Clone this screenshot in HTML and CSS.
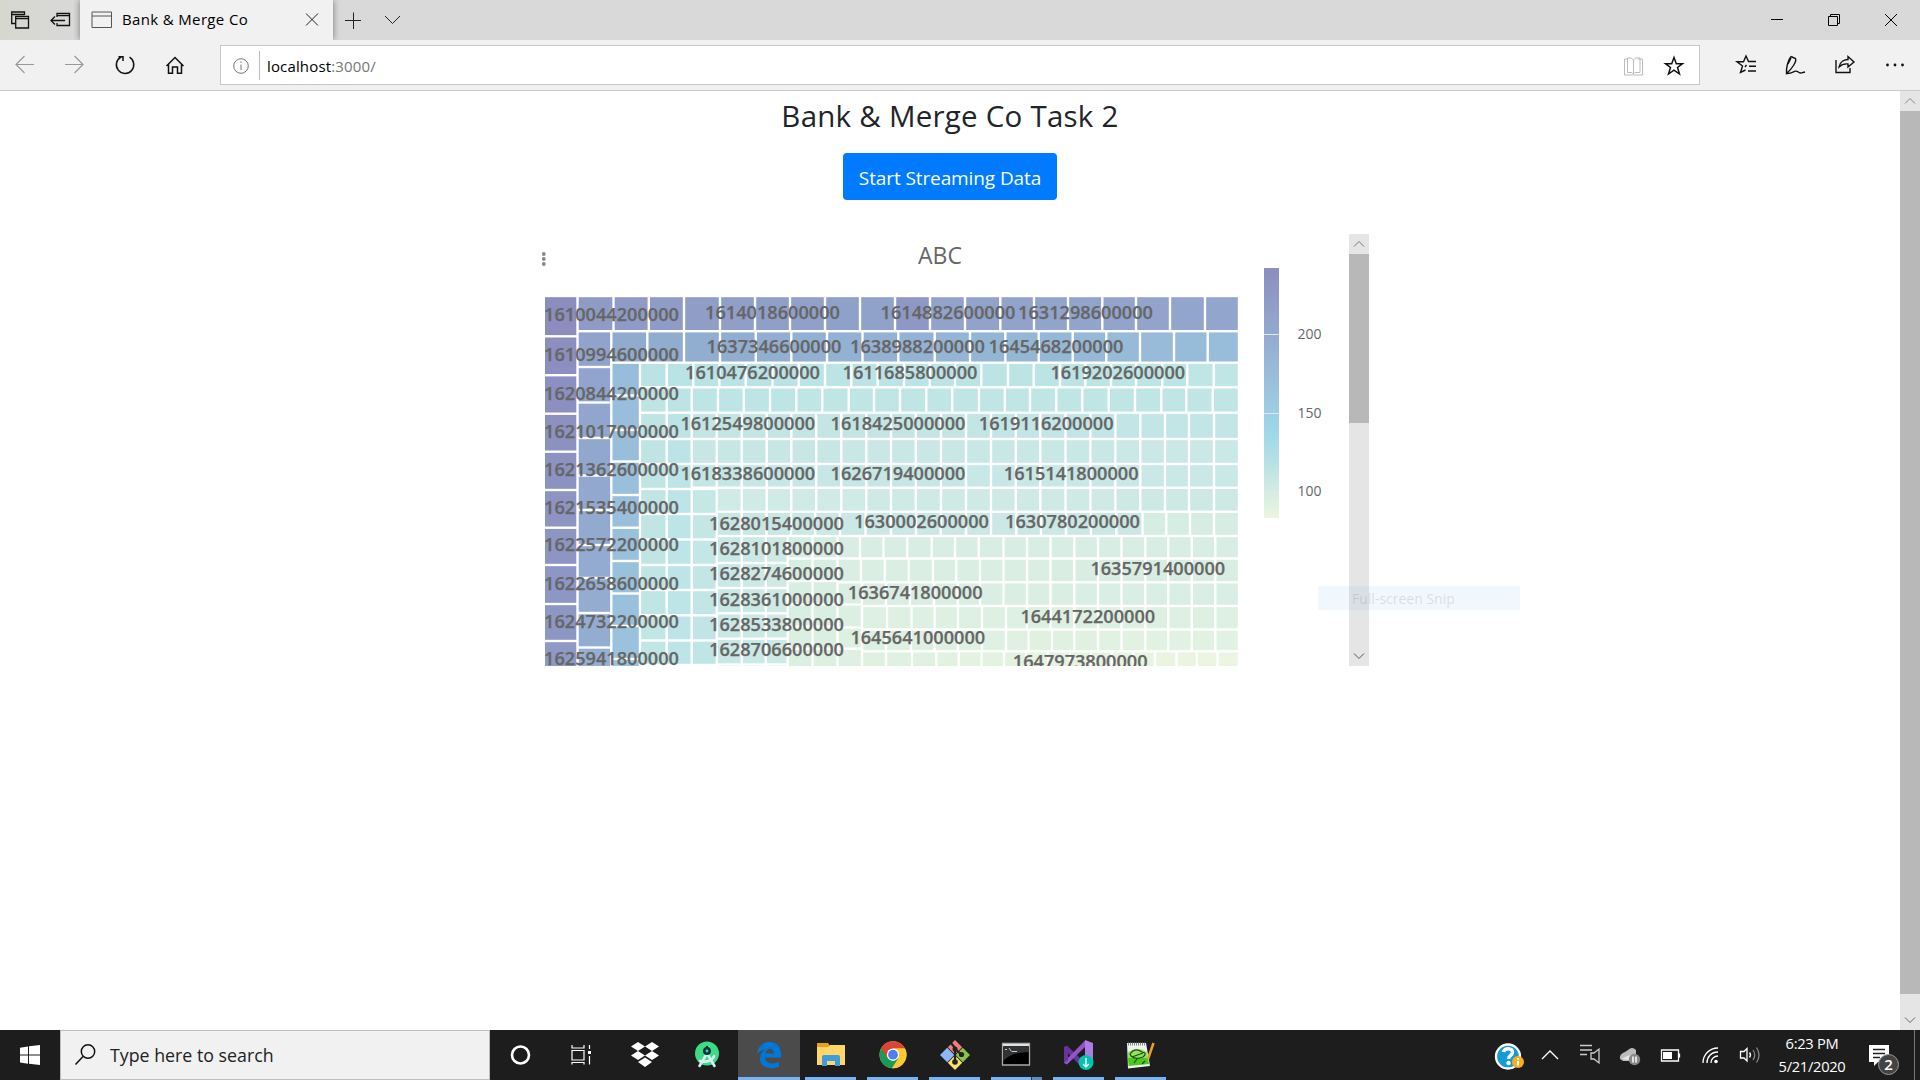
FILE: index.html
```html
<!DOCTYPE html>
<html lang="en">
<head>
<meta charset="utf-8">
<title>Bank &amp; Merge Co</title>
<link rel="stylesheet" href="styles.css">
</head>
<body>
<header class="tabstrip">
  <svg class="tab-tools" width="80" height="40" fill="none" stroke="#111" stroke-width="1.3">
    <path d="M15 23.500H11.700V12H24.500V15M11.700 14.500H24.500"/><path d="M15.700 16.500H28.500V28H15.700ZM15.700 18.700H28.500"/>
    <path d="M57 17V13.500H69.500V25.500H57V23M57 15.700H69.500M51 20.500H65M55 16.500L51 20.500L55 24.500"/>
  </svg>
  <div class="tab">
    <svg width="22" height="18" fill="none" stroke="#555"><path d="M1 1H20.500V16.500H1ZM1 5H20.500"/></svg>
    <span class="tab-title">Bank &amp; Merge Co</span>
    <svg width="16" height="16" fill="none" stroke="#222"><path d="M2 1.500L14 13.500M14 1.500L2 13.500"/></svg>
  </div>
  <svg width="90" height="40" fill="none" stroke="#222"><path d="M12 20.500H28M20.500 12.500V29M52 16L59.500 23.500L67 16"/></svg>
  <svg class="window-buttons" width="140" height="40" fill="none" stroke="#000"><path d="M1 19.500H13M58.500 16.500H67.500V25.500H58.500ZM60.500 16.500V14.500H69.500V23.500H67.500M115 14L127 26M127 14L115 26"/></svg>
</header>
<nav class="toolbar">
  <svg class="nav-icons" width="220" height="50" fill="none" stroke="#999" stroke-width="1.2">
    <path d="M34 24.500H16M24.500 16L16 24.500L24.500 33M65 24.500H83M74.500 16L83 24.500L74.500 33"/>
    <path stroke="#111" stroke-width="1.5" d="M129.500 17.200A8.700 8.700 0 1 1 121 17M118.500 16.700H123V21"/>
    <path stroke="#111" stroke-width="1.5" d="M166.500 26L175 17.500L183.500 26M168.500 24.500V33.300H172.500V27H177.500V33.300H181.500V24.500"/>
  </svg>
  <div class="address">
    <svg width="40" height="38" fill="none" stroke="#777"><circle cx="20" cy="20" r="7.300"/><path d="M20 18.500V24M20 15.500V17"/><path stroke="#bbb" d="M38.500 5V34"/></svg>
    <span class="url">localhost<i>:3000/</i></span>
    <svg class="address-icons" width="80" height="38" fill="none">
      <path stroke="#bbb" d="M5.500 13H9M19 13H23.500V29H5.500V13M8.500 12H12L14.500 14L17 12H21V26.500H16L14.500 28L13 26.500H8.500ZM14.500 14V28"/>
      <path stroke="#111" stroke-width="1.500" d="M55 11.500L57.300 17.700H63.500L58.500 21.500L60.500 28L55 24.200L49.500 28L51.500 21.500L46.500 17.700H52.700Z"/>
    </svg>
  </div>
  <svg class="tools" width="190" height="50" fill="none" stroke="#111" stroke-width="1.4">
    <path d="M15.500 30L10.500 32.500L12.500 26L7 21.800H13.500L16 16L18.500 21.500H26M19 26.300H26M18 31H26M16.500 25L15 27"/>
    <path d="M61 16.500L65.500 18.500C67 21 62 29 56.500 33.500C56 28 58 20 61 16.500M61 18L58 24M57 33.500C65 33 64 29 69 32.500C71 34 72 32.500 75 32"/>
    <path d="M106 20V32.500H120V28M109 27C110 21 115 19.500 118 19.500V16.500L124 22L118 27V24C114 23.500 111 25 109 27Z"/>
    <g fill="#111" stroke="none"><circle cx="157.500" cy="25" r="1.400"/><circle cx="165" cy="25" r="1.400"/><circle cx="172.500" cy="25" r="1.400"/></g>
  </svg>
</nav>
<div class="viewport">
  <main class="page">
    <h1>Bank &amp; Merge Co Task 2</h1>
    <button class="start">Start Streaming Data</button>
    <section class="panel">
      <svg class="chart" viewBox="531 234 818 432" width="818" height="432">
        <defs><linearGradient id="scale" x1="0" y1="0" x2="0" y2="1"><stop offset="0" stop-color="#8b8dbe"/><stop offset=".22" stop-color="#92a5cd"/><stop offset=".66" stop-color="#9fd8e9"/><stop offset=".77" stop-color="#b4e1e5"/><stop offset=".93" stop-color="#dcefe2"/><stop offset="1" stop-color="#ecf5e0"/></linearGradient></defs>
        <g fill="#888"><circle cx="543.800" cy="254" r="1.900"/><circle cx="543.800" cy="259" r="1.900"/><circle cx="543.800" cy="264" r="1.900"/></g>
        <text class="chart-title" x="940" y="264">ABC</text>
        <g id="tiles"></g>
        <g id="labels"></g>
        <rect x="1264" y="268" width="15" height="250" fill="url(#scale)"/>
        <path stroke="#e3e6ea" d="M1264 334.500H1279M1264 413.500H1279M1264 491.500H1279"/>
        <g class="legend"><text x="1297.500" y="339">200</text><text x="1297.500" y="418">150</text><text x="1297.500" y="496">100</text></g>
      </svg>
      <div class="scroll">
        <svg width="20" height="20" fill="none" stroke="#777"><path d="M5 12.500L10 7.500L15 12.500"/></svg>
        <div class="thumb"></div>
        <svg class="down" width="20" height="20" fill="none" stroke="#555"><path d="M5 7.500L10 12.500L15 7.500"/></svg>
      </div>
    </section>
    <div class="snip">Full-screen Snip</div>
  </main>
  <div class="scroll page-scroll">
    <svg width="20" height="20" fill="none" stroke="#888"><path d="M5 12.500L10 7.500L15 12.500"/></svg>
    <div class="thumb"></div>
    <svg class="down" width="20" height="20" fill="none" stroke="#666"><path d="M5 7.500L10 12.500L15 7.500"/></svg>
  </div>
</div>
<footer class="taskbar">
  <div class="win"><svg width="60" height="50" fill="#fff"><path d="M20 17.700L28 16.500V24.500H20ZM29 16.300L40 15V24.500H29ZM20 25.500H28V33.700L20 32.500ZM29 25.500H40V35L29 33.800Z"/></svg></div>
  <div class="search">
    <svg width="48" height="46" fill="none" stroke="#111" stroke-width="1.500"><circle cx="27" cy="20.500" r="6.700"/><path d="M22 25.500L14.500 33.500"/></svg>
    <span>Type here to search</span>
  </div>
  <div class="apps">
    <div class="app"><svg width="62" height="50"><circle cx="30.500" cy="25" r="8.500" fill="none" stroke="#fff" stroke-width="2.600"/></svg></div>
    <div class="app"><svg width="62" height="50" fill="none" stroke="#fff" stroke-width="1.200"><path d="M20 20.500H32V30H20ZM20 15V18H32V15M20 34.500V32.500H32V34.500M37.500 15V19M37.500 26V34.500"/><path fill="#fff" stroke="none" d="M36 21H39V24H36Z"/></svg></div>
    <div class="app"><svg width="62" height="50" fill="#fff"><path d="M17 16.500L24 12L31 16.500L24 21ZM31 16.500L38 12L45 16.500L38 21ZM17 25.500L24 21L31 25.500L24 30ZM31 25.500L38 21L45 25.500L38 30ZM24 32L31 27.500L38 32L31 37Z"/></svg></div>
    <div class="app"><svg width="62" height="50"><circle cx="31" cy="23.500" r="12" fill="#3ddc84"/><path d="M30 25L23.500 36M32 25L38.500 36M24 31C31 33 37 30 38 26" stroke="#d8edf5" stroke-width="2.600" fill="none" stroke-linecap="round"/><circle cx="31" cy="21" r="2.700" fill="none" stroke="#073042" stroke-width="2.500"/><path stroke="#073042" stroke-width="2" d="M31 16V18"/></svg></div>
    <div class="app open active"><svg width="62" height="50"><path fill="#0078d7" d="M19 24C20 16 25 12 31.500 12C39 12 43 17.500 43 24V27.500H27C27.500 34 36 35 41 31.500V36.500C33 40.500 22 38 22 28.500C22 24 24.500 21.500 27.500 20C22.500 20.500 20.500 22 19 24ZM27.500 23.500H36C36 17.500 28 17.500 27.500 23.500Z"/></svg></div>
    <div class="app open"><svg width="62" height="50"><path fill="#e8a317" d="M17 13H28L30 16V21H17Z"/><path fill="#ffd667" d="M17 17H28L30 15H45V35H17Z"/><path fill="#3d9cdb" d="M22 36V27Q22 25 24 25H38Q40 25 40 27V36H35V31H27V36Z"/></svg></div>
    <div class="app open"><svg width="62" height="50"><circle cx="31" cy="24.700" r="13.500" fill="#fbc834"/><path fill="#189b58" d="M31 24.700L19.300 18A13.500 13.500 0 0 0 30 38.200L37 28Z"/><path fill="#dc4436" d="M31 24.700V18.500H43A13.500 13.500 0 0 0 19.300 18L25 28Z"/><path fill="#fbc834" d="M31 24.700L36.500 28L30 38.200A13.500 13.500 0 0 0 43 18.500H31Z"/><circle cx="31" cy="24.700" r="6.200" fill="#fff"/><circle cx="31" cy="24.700" r="4.900" fill="#4a83ee"/></svg></div>
    <div class="app open"><svg width="62" height="50"><path fill="#f47c7c" d="M31 10L38.200 17.200L31 24.400L23.800 17.200Z"/><path fill="#8db8f8" d="M23.200 17.800L30.400 25L23.200 32.200L16 25Z"/><path fill="#8bc34a" d="M38.800 17.800L46 25L38.800 32.200L31.600 25Z"/><path fill="#ffdf6c" d="M31 25.600L38.200 32.800L31 40L23.800 32.800Z"/><path stroke="#222" stroke-width="2.200" fill="none" d="M27 13L31 18V33M31 19L38 25"/><g fill="#222"><circle cx="31" cy="19" r="2.500"/><circle cx="31" cy="32" r="2.800"/><circle cx="37.500" cy="24.500" r="2.600"/></g></svg></div>
    <div class="app open split"><svg width="62" height="50"><path fill="#000" stroke="#aaa" stroke-width="1.300" d="M16.500 13.500H43.500V35H16.500Z"/><path fill="#dde3e8" d="M17 14H43V16.200H17Z"/><path fill="#333" d="M17 17H43V22Q26 22 17 31Z"/><path stroke="#ccc" d="M19 19.500H21M23 18L25.500 21.500M26 21.500H31"/></svg></div>
    <div class="app open"><svg width="62" height="50"><path fill="#68349b" d="M16 17L19 15.500L37 33V36L34 37.500L16 19Z"/><path fill="#9055ca" d="M16 32L37 10.500V17L19 34.500L16 33Z"/><path fill="#68349b" d="M16 17L20 20V30L16 33Z"/><path fill="#b07ae8" d="M37 10L45 13V35L37 39Z"/><circle cx="38" cy="32.500" r="7.500" fill="#00c4ad"/><path stroke="#fff" stroke-width="1.400" fill="none" d="M38 28V37M35 34L38 37L41 34"/></svg></div>
    <div class="app open"><svg width="62" height="50"><path fill="#f0f2ee" d="M17 13H36L40 36L18 38.500Z"/><path fill="#8fe35d" d="M18 22Q28 16 37 22L38 28L18 29Z"/><path fill="#4bc81c" d="M18 28H38L39 34L18.500 36Z"/><path stroke="#888" stroke-dasharray="1 1" stroke-width="3" d="M18 14H35"/><path fill="none" stroke="#234d16" stroke-width="1.200" d="M20 24Q25 17 32 22Q38 23 33 27Q25 30 21 26ZM22 27L33 23M24 33L27 29M32 34L35 31"/><path stroke="#e8a128" stroke-width="2.500" d="M43.500 13L38 29"/></svg></div>
  </div>
  <svg class="tray" width="270" height="50" fill="none" stroke="#fff" stroke-width="1.300">
    <circle cx="18" cy="26.500" r="12" fill="#159bd7" stroke-width="2.300"/><path stroke-width="3.500" d="M13.500 22C14 17.500 23 17.500 22.500 22.500C22 26 18.500 25.500 18.500 29"/><circle cx="18.500" cy="33" r="2.200" fill="#fff" stroke="none"/>
    <circle cx="28" cy="32" r="6" fill="#fbad22" stroke="none"/><path stroke-width="2" d="M28 31V35.500M28 28V29.700"/>
    <path d="M52 29L60 21L68 29"/>
    <path stroke="#ccc" d="M90 15.500H102M90 20H102M90 24.500H97M101 23H104L109 19V33L104 29H101Z"/>
    <g stroke="none"><path fill="#bbb" d="M133 31H146V20Q142 16 138 20L135 22Q129 24 130 29Z"/><path fill="#e4e4e4" d="M132 29Q140 23 147 26L144 31Z"/><circle cx="144.500" cy="29.500" r="5.700" fill="#888"/></g><path stroke-width="1.500" d="M143 26.500V32.500M146 26.500V32.500"/>
    <path d="M171.500 20H188.500V31H171.500ZM189.500 23.500V27.500"/><path fill="#fff" stroke="none" d="M173 22H182V29H173Z"/>
    <path d="M213 33C213 25 219 18 228 18M217 33C217 27 221 22 228 22M221 33C221 29 224 26 228 26"/><circle cx="226" cy="31.500" r="1.800" fill="#fff" stroke="none"/>
    <path d="M250.500 21.500H254L257 18.500V31L254 28H250.500ZM259.500 22.500Q261.500 25 259.500 27.500"/><path stroke="#888" d="M263 20Q266.500 25 263 30M266.500 17.500Q271.500 25 266.500 32.500"/>
  </svg>
  <div class="clock"><span>6:23 PM</span><span>5/21/2020</span></div>
  <svg class="notice" width="60" height="50"><path fill="#fff" d="M9 15H29V32H18L14 36V32H9Z"/><path stroke="#222" stroke-width="1.500" d="M13 19.500H25M13 23.500H25M13 27.500H20"/><circle cx="28.500" cy="34.500" r="10" fill="#444" stroke="#999"/><text x="28.500" y="40">2</text><path stroke="#777" d="M54.500 0V50"/></svg>
</footer>
<script src="chart.js"></script>
</body>
</html>
```
FILE: styles.css
```css
* { box-sizing: border-box; }
body { margin: 0; height: 1080px; display: flex; flex-direction: column; overflow: hidden; background: #fff; font-family: "Open Sans", "Noto Sans", sans-serif; color: #000; }
svg { display: block; flex: none; }
.tabstrip { display: flex; height: 40px; background: #d9d9d9; flex: none; }
.tab-tools { background: linear-gradient(90deg, #d5d7cf, #d9d9d9); }
.tab { width: 253px; display: flex; align-items: center; padding: 0 13px 0 11px; background: #f1f1f1; box-shadow: 0 0 7px #777; clip-path: inset(0 -7px 0 -7px); }
.tab-title { flex: 1; padding: 0 0 2px 9px; font-size: 15px; letter-spacing: .35px; }
.window-buttons { margin-left: auto; margin-right: 10px; }
.toolbar { display: flex; height: 51px; flex: none; background: #f1f1f1; border-bottom: 1px solid #c9c9c9; }
.address { display: flex; width: 1480px; height: 40px; margin: 5px 0 0; border: 1px solid #c6c6c6; background: #fff; }
.tools { margin-left: 30px; }
.url { padding-left: 6px; line-height: 40px; font-size: 15px; letter-spacing: .15px; }
.url i { font-style: normal; color: #767676; }
.address-icons { margin-left: auto; }
.viewport { display: flex; height: 939px; flex: none; }
.page { position: relative; width: 1900px; display: flex; flex-direction: column; align-items: center; }
h1 { margin: 6px 0 20px; height: 36px; line-height: 38px; font-size: 29.500px; letter-spacing: .24px; font-weight: 400; color: #212529; white-space: nowrap; }
.start { width: 214px; height: 47px; padding: 3px 0 0; border: 0; border-radius: 4px; background: #007bff; color: #fff; font: 19px/44px "Open Sans", sans-serif; letter-spacing: -.1px; white-space: nowrap; }
.panel { display: flex; width: 838px; height: 432px; margin-top: 34px; }
.chart text { fill: #666; text-anchor: middle; font-size: 18.150px; font-weight: 600; }
#labels text { stroke: #666; stroke-width: .25px; }
.chart .chart-title { font-size: 23px; font-weight: 400; }
.chart .legend text { font-size: 14px; font-weight: 400; text-anchor: start; }
.scroll { width: 20px; background: #e5e5e5; display: flex; flex-direction: column; }
.thumb { height: 169px; background: #b8b8b8; }
.page-scroll .thumb { height: 883px; }
.down { margin-top: auto; }
.snip { position: absolute; left: 1318px; top: 495px; width: 202px; height: 24px; padding-left: 34px; line-height: 25px; font-size: 14px; color: rgba(120, 100, 90, .2); background: rgba(60, 160, 240, .08); }
.taskbar { display: flex; height: 50px; flex: none; background: #1d1d1d; color: #fff; }
.search { display: flex; width: 430px; height: 50px; border: 1px solid #bdbdbd; background: #f1f1f1; color: #222; font-size: 17.800px; line-height: 49px; }
.search span { padding-left: 1px; }
.apps { display: flex; }
.app { width: 62px; display: flex; justify-content: center; position: relative; }
.app svg { margin-left: -1px; }
.open::after { content: ""; position: absolute; bottom: 0; left: 5px; width: 51px; height: 3px; background: #76b4f8; }
.active { background: #4b4b4b; }
.active::after { left: 0; width: 62px; }
.split::after { background: linear-gradient(90deg, #76b4f8 40px, #333 40px, #333 41px, #5d8cc4 41px); }
.tray { margin-left: auto; }
.clock { display: flex; flex-direction: column; align-items: center; width: 100px; font-size: 14.700px; line-height: 23px; padding-top: 2px; padding-left: 4px; letter-spacing: -.3px; white-space: nowrap; }
.notice text { fill: #fff; font-size: 15px; font-weight: 600; text-anchor: middle; }
```
FILE: chart.js
```js
const NS = 'http://www.w3.org/2000/svg';
const tileLayer = document.getElementById('tiles');
const labelLayer = document.getElementById('labels');

function mix(a, b, t) {
  const p = c => [1, 3, 5].map(i => parseInt(c.substr(i, 2), 16));
  const x = p(a), y = p(b);
  return `rgb(${x.map((v, i) => Math.round(v + (y[i] - v) * t)).join(',')})`;
}
function tile(x0, y0, x1, y1, fill) {
  const r = document.createElementNS(NS, 'rect');
  const set = { x: x0 + 1.2, y: y0 + 1.2, width: x1 - x0 - 2.4, height: y1 - y0 - 2.4, fill };
  for (const k in set) r.setAttribute(k, set[k]);
  tileLayer.append(r);
}
function row(y0, y1, xs, a, b) {
  for (let i = 0; i < xs.length - 1; i++) tile(xs[i], y0, xs[i + 1], y1, mix(a, b, i / (xs.length - 1)));
}
function column(x0, x1, ys, a, b) {
  for (let i = 0; i < ys.length - 1; i++) tile(x0, ys[i], x1, ys[i + 1], mix(a, b, i / (ys.length - 1)));
}

column(543.8, 577.5, [296, 336.3, 375.2, 413.7, 451.7, 490, 527.7, 565, 604, 641, 680], '#8b8dbe', '#8e9ac6');
row(296, 331.2, [577.5, 613.5, 648.8, 684, 720, 755, 790, 825, 860], '#8f9ac5', '#90a2ca');
tile(860, 296, 895, 331.2, '#90a1ca');
tile(895, 296, 930, 331.2, '#8f98c5');
row(296, 331.2, [930, 965, 1000.3, 1034, 1068, 1102.3, 1136, 1170, 1205, 1239], '#91a3cb', '#92a5cd');
column(577.5, 611.3, [331.2, 367, 402.5, 438, 475.5, 510, 545, 578, 613, 647.5, 683], '#91a3cc', '#94b0d2');
row(331.2, 362.7, [611.3, 647.3, 684, 720, 755.8, 791.3, 827, 862.5, 898.3, 934.7, 970, 1005.3, 1038.7, 1072.7, 1106.3, 1140, 1174, 1207.7, 1239], '#90abce', '#98bedb');
column(611.3, 640, [362.7, 395.5, 430, 461.5, 495, 527.7, 561, 593.5, 626, 659, 690], '#98bddb', '#9bc3dd');

row(362.7, 387.3, [640, 666.7, 693.2, 719.3, 745.7, 772.5, 798.7, 825, 851.3, 877.7, 904, 929.7, 955, 981.3, 1008, 1033.7, 1060, 1085.3, 1111, 1136, 1162.3, 1187.3, 1213.7, 1239], '#bae3e6', '#bfe5e5');
const ys = [387.3, 412.7, 439, 464, 489, 514, 539.5, 565, 590, 615.3, 640.5, 665, 691];
column(640, 666.7, ys, '#bee4e4', '#c1e6e6');
column(666.7, 691.7, ys, '#bce4e6', '#bee4e7');
column(691.7, 716.7, ys.slice(4), '#c5e7e6', '#bee4e6');
row(387.3, 412.7, [691.7, 718, 743.7, 770, 796.3, 822.3, 848.7, 874, 900, 926.3, 952.3, 979, 1004.8, 1030, 1056.3, 1082.3, 1108.7, 1135, 1161.3, 1186.3, 1212.7, 1239], '#bee5e5', '#c1e5e5');
const xs = [691.7, 716.7, 741.7, 766.7, 791.3, 816.2, 841.3, 866.3, 891, 915.8, 941, 966, 991, 1015.8, 1040.3, 1065.5, 1090.4, 1115.4, 1140.3, 1165, 1189, 1214, 1239];
row(412.7, 439, xs, '#c3e6e4', '#c2e5e5');
row(439, 464, xs, '#c7e7e5', '#c9e8e6');
row(464, 487.7, xs, '#c4e7e6', '#cae8e6');
row(487.7, 511.8, xs.slice(1), '#d0eae5', '#cee9e4');
row(511.8, 536, [716.7, 741.7, 766.5, 791, 815.2, 840, 865.5, 891, 916, 940.7, 966, 991], '#c9e8e5', '#cbe8e5');
row(511.8, 536, [991, 1016.3, 1041, 1066, 1091, 1116.3, 1142.5], '#cbe8e6', '#cbe8e3');
row(511.8, 536, [1142.5, 1166.3, 1190, 1214, 1239], '#d6ede3', '#d7ede3');

const sub = [536, 563, 588, 613.3, 638.7, 664.5, 690];
column(716.7, 741.7, sub, '#c9e8e6', '#c9e8e5');
column(741.7, 765.8, sub, '#cce9e5', '#cbe9e6');
column(765.8, 787.7, sub, '#cfeae5', '#cfeae5');
const hy = [536, 558.5, 581, 604.3, 626.5, 648.7, 671];
column(787.7, 812.5, hy, '#d6ede3', '#ddf0e2');
column(812.5, 837.5, hy, '#d6ede3', '#def0e2');
const tail = [1003.5, 1027, 1050.5, 1074.3, 1098, 1121.5, 1145.3, 1168.2, 1191.8, 1215.3, 1239];
row(536, 558.5, [837.5, 860, 883.5, 907.3, 931.7, 955, 978.7, ...tail], '#d8ede3', '#d8ede3');
row(558.5, 582.3, [837.5, 861, 884.7, 908.7, 933, 956.3, 980, ...tail], '#daeee3', '#d9ede3');
column(837.5, 862, [582.3, 604.5, 627.5, 648.7, 671], '#daeee3', '#e1f1e1');
row(582.3, 606, [862, 886, 910, 934, 957.7, 980, ...tail], '#daeee3', '#d9eee4');
row(606, 629.5, [862, 887, 911.5, 934.7, 958, 982, 1006, ...tail.slice(1)], '#ddf0e1', '#def0e2');
row(629.5, 651.3, [862, 886, 911, 934.5, 958, 982, 1006, 1028.5, 1052, ...tail.slice(3)], '#def0e2', '#e2f2e2');
row(651.3, 675, [862, 886, 912, 936.3, 958.7, 981.5, 1004, 1026, 1048, 1070, 1091, 1112, 1133.5, 1155, 1176.5, 1196.7, 1217.5, 1239], '#e0f1e1', '#ecf5e1');

// Label: text, centre x, baseline y
const labels = [
  ['1610044200000', 612, 320.7], ['1610994600000', 612, 360.5], ['1620844200000', 612, 400], ['1621017000000', 612, 438],
  ['1621362600000', 612, 475.8], ['1621535400000', 612, 513.8], ['1622572200000', 612, 551], ['1622658600000', 612, 590],
  ['1624732200000', 612, 628], ['1625941800000', 612, 665],
  ['1614018600000', 773, 319], ['1614882600000', 948.5, 319], ['1631298600000', 1086, 319],
  ['1637346600000', 774.5, 353], ['1638988200000', 918, 353], ['1645468200000', 1056.5, 353],
  ['1610476200000', 753, 379], ['1611685800000', 910.5, 379], ['1619202600000', 1118.3, 379],
  ['1612549800000', 748.3, 430], ['1618425000000', 898.5, 430], ['1619116200000', 1046.7, 430],
  ['1618338600000', 748.3, 480], ['1626719400000', 898.5, 480], ['1615141800000', 1071.7, 480],
  ['1628015400000', 777, 529.7], ['1630002600000', 922, 528], ['1630780200000', 1073, 528],
  ['1628101800000', 777, 555], ['1628274600000', 777, 580], ['1628361000000', 777, 606],
  ['1628533800000', 777, 631], ['1628706600000', 777, 656],
  ['1635791400000', 1158.3, 575], ['1636741800000', 915.7, 599], ['1644172200000', 1088.3, 623],
  ['1645641000000', 918.3, 644], ['1647973800000', 1080.7, 668]
];
for (const [text, x, y] of labels) {
  const t = document.createElementNS(NS, 'text');
  t.setAttribute('x', x - 0.5);
  t.setAttribute('y', y);
  t.textContent = text;
  labelLayer.append(t);
}
```
